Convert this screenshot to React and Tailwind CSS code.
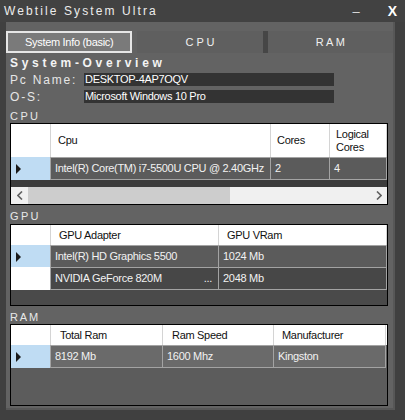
import React from 'react'

const FONT = { fontFamily: '"Liberation Sans", Arial, sans-serif' }

function RowArrow() {
  return (
    <svg width="6" height="10" viewBox="0 0 6 10" className="ml-[5px]">
      <path d="M0 0 L5 5 L0 10 Z" fill="#1a1a1a" />
    </svg>
  )
}

function HeaderRow({ cols, height }) {
  return (
    <div className="flex bg-white" style={{ height }}>
      <div className="w-[40px] shrink-0 bg-white border-r border-[#d4d4d4]" />
      {cols.map((c) => (
        <div
          key={c.label}
          className="shrink-0 flex items-center border-r border-[#d4d4d4] text-[11px] tracking-[-0.3px] leading-[13px] text-[#111]"
          style={{ width: c.w, paddingLeft: c.pad }}
        >
          {c.label}
        </div>
      ))}
    </div>
  )
}

function DataRow({ cells, widths, selected, bg, height }) {
  return (
    <div className="flex" style={{ height }}>
      <div
        className={`w-[40px] shrink-0 flex items-center ${selected ? 'bg-[#bfdcf3]' : 'bg-white'}`}
      >
        {selected && <RowArrow />}
      </div>
      {cells.map((c, i) => (
        <div
          key={i}
          className="shrink-0 flex items-center justify-between border border-[#a3a3a3] -ml-px first:ml-0 px-[4px] text-[11px] tracking-[-0.3px] text-[#f2f2f2] whitespace-nowrap overflow-hidden"
          style={{ width: widths[i], backgroundColor: bg }}
        >
          <span>{c}</span>
          {typeof c === 'string' && c.startsWith('NVIDIA') && <span className="mr-[2px]">...</span>}
        </div>
      ))}
    </div>
  )
}

function Label({ children }) {
  return (
    <div className="h-[14px] leading-[14px] text-[11px] tracking-[-0.3px] text-[#e8e8e8] pl-[4px]">
      {children}
    </div>
  )
}

export default function App() {
  return (
    <div className="w-[405px] h-[420px] bg-[#404040] flex flex-col overflow-hidden" style={FONT}>
      {/* title bar */}
      <div className="h-[22px] shrink-0 flex items-center pl-[4px] pr-[8px] bg-[#424242]">
        <span className="text-[12px] tracking-[2.1px] text-[#ececec]">Webtile System Ultra</span>
        <span className="ml-auto text-[13px] text-[#e0e0e0] mr-[28px] leading-none">–</span>
        <span className="text-[14px] font-bold text-white leading-none">X</span>
      </div>

      {/* body */}
      <div className="ml-[6px] w-[389px] h-[388px] bg-[#636363] border-r-2 border-b-2 border-[#575757] flex flex-col">
        {/* tabs */}
        <div className="flex h-[22px] mt-[9px] shrink-0">
          <div className="w-[127px] border-2 border-[#e6e6e6] bg-[#7a7a7a] flex items-center justify-center text-[11px] tracking-[-0.3px] text-white">
            System Info (basic)
          </div>
          <div className="w-[5px]" />
          <div className="w-[126px] bg-[#5f5f5f] flex items-center justify-center text-[11px] text-[#f0f0f0]">
            C P U
          </div>
          <div className="w-[5px] bg-[#464646]" />
          <div className="w-[126px] bg-[#5f5f5f] flex items-center justify-center text-[11px] text-[#f0f0f0]">
            R A M
          </div>
        </div>

        {/* overview */}
        <div className="mt-[3px] pl-[4px] h-[14px] leading-[14px] text-[12px] font-bold tracking-[3.7px] text-[#f4f4f4]">
          System-Overview
        </div>
        <div className="mt-[3px] flex items-center h-[13px]">
          <span className="w-[78px] pl-[4px] text-[12px] tracking-[1.8px] text-[#e6e6e6]">Pc Name:</span>
          <div className="w-[250px] h-[13px] bg-[#333333] pl-[1px] text-[11px] leading-[13px] tracking-[-0.3px] text-white">
            DESKTOP-4AP7OQV
          </div>
        </div>
        <div className="mt-[4px] flex items-center h-[13px]">
          <span className="w-[78px] pl-[4px] text-[12px] tracking-[1.8px] text-[#e6e6e6]">O-S:</span>
          <div className="w-[250px] h-[13px] bg-[#333333] pl-[1px] text-[11px] leading-[13px] tracking-[-0.3px] text-white">
            Microsoft Windows 10 Pro
          </div>
        </div>

        {/* CPU */}
        <div className="mt-[6px]">
          <Label>C P U</Label>
        </div>
        <div className="ml-[4px] w-[378px] h-[82px] border border-black bg-[#3c3c3c] flex flex-col overflow-hidden">
          <HeaderRow
            height={33}
            cols={[
              { label: 'Cpu', w: 220, pad: 7 },
              { label: 'Cores', w: 59, pad: 6 },
              { label: <span>Logical<br />Cores</span>, w: 57, pad: 6 },
            ]}
          />
          <DataRow
            height={23}
            selected
            bg="#5b5b5b"
            widths={[221, 60, 58]}
            cells={['Intel(R) Core(TM) i7-5500U CPU @ 2.40GHz', '2', '4']}
          />
          <div className="h-[7px]" />
          <div className="h-[17px] bg-[#f0f0f0] flex items-center">
            <div className="w-[17px] flex justify-center">
              <svg width="6" height="9" viewBox="0 0 6 9"><path d="M5 0.5 L1 4.5 L5 8.5" stroke="#606060" strokeWidth="1.6" fill="none" /></svg>
            </div>
            <div className="w-[202px] h-[17px] bg-[#cdcdcd]" />
            <div className="ml-auto w-[17px] flex justify-center">
              <svg width="6" height="9" viewBox="0 0 6 9"><path d="M1 0.5 L5 4.5 L1 8.5" stroke="#606060" strokeWidth="1.6" fill="none" /></svg>
            </div>
          </div>
        </div>

        {/* GPU */}
        <div className="mt-[4px]">
          <Label>G P U</Label>
        </div>
        <div className="ml-[4px] mt-[1px] w-[378px] h-[82px] border border-black bg-[#4a4a4a] flex flex-col overflow-hidden">
          <HeaderRow
            height={20}
            cols={[
              { label: 'GPU Adapter', w: 168, pad: 8 },
              { label: 'GPU VRam', w: 168, pad: 8 },
            ]}
          />
          <DataRow
            height={23}
            selected
            bg="#5b5b5b"
            widths={[169, 169]}
            cells={['Intel(R) HD Graphics 5500', '1024 Mb']}
          />
          <div className="-mt-px">
            <DataRow
              height={23}
              bg="#474747"
              widths={[169, 169]}
              cells={['NVIDIA GeForce 820M', '2048 Mb']}
            />
          </div>
        </div>

        {/* RAM */}
        <div className="mt-[4px]">
          <Label>R A M</Label>
        </div>
        <div className="ml-[4px] w-[378px] h-[82px] border border-black bg-[#5c5c5c] flex flex-col overflow-hidden">
          <HeaderRow
            height={20}
            cols={[
              { label: 'Total Ram', w: 112, pad: 9 },
              { label: 'Ram Speed', w: 111, pad: 9 },
              { label: 'Manufacturer', w: 112, pad: 8 },
            ]}
          />
          <DataRow
            height={23}
            selected
            bg="#6a6a6a"
            widths={[113, 112, 113]}
            cells={['8192 Mb', '1600 Mhz', 'Kingston']}
          />
        </div>
      </div>
    </div>
  )
}
